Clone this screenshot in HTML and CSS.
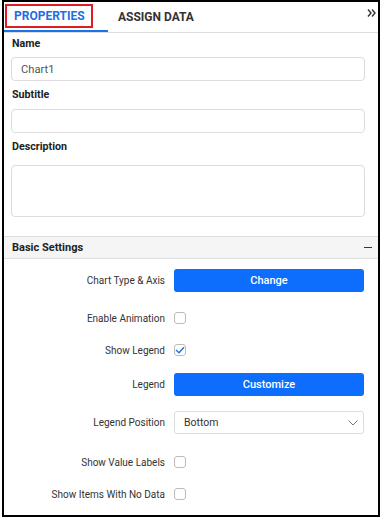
FILE: index.html
```html
<!DOCTYPE html>
<html>
<head>
<meta charset="utf-8">
<link rel="stylesheet" href="styles.css">
</head>
<body>
<div class="frame">
  <div class="tabs">
    <div class="tab active"><span class="tab-label boxed">PROPERTIES</span></div>
    <div class="tab"><span class="tab-label">ASSIGN DATA</span></div>
    <div class="tab-fill"></div>
    <svg class="collapse" width="9" height="8" viewBox="0 0 9 8"><path d="M1 0.5 L4 4 L1 7.5 M5 0.5 L8 4 L5 7.5" fill="none" stroke="#333" stroke-width="1.4"/></svg>
  </div>
  <div class="fields">
    <div class="field-label">Name</div>
    <div class="input">Chart1</div>
    <div class="field-label">Subtitle</div>
    <div class="input second"></div>
    <div class="field-label desc">Description</div>
    <div class="input textarea"></div>
  </div>
  <div class="section-head">
    <span>Basic Settings</span>
    <span class="minus"></span>
  </div>
  <div class="rows">
    <div class="row r-btn"><div class="lbl">Chart Type &amp; Axis</div><div class="btn">Change</div></div>
    <div class="row r-chk m14"><div class="lbl">Enable Animation</div><div class="chk"></div></div>
    <div class="row r-chk m8"><div class="lbl">Show Legend</div><div class="chk"><svg width="10" height="8" viewBox="0 0 10 8"><path d="M1 4 L4 6.8 L9 1.2" fill="none" stroke="#1a73e8" stroke-width="1.4"/></svg></div></div>
    <div class="row r-btn m11"><div class="lbl">Legend</div><div class="btn">Customize</div></div>
    <div class="row r-btn m15"><div class="lbl">Legend Position</div><div class="select"><span>Bottom</span><svg width="10" height="6" viewBox="0 0 10 6"><path d="M0.5 0.5 L5 5 L9.5 0.5" fill="none" stroke="#777" stroke-width="1"/></svg></div></div>
    <div class="row r-chk m16"><div class="lbl">Show Value Labels</div><div class="chk"></div></div>
    <div class="row r-chk m8"><div class="lbl">Show Items With No Data</div><div class="chk"></div></div>
  </div>
</div>
</body>
</html>
```
FILE: styles.css
```css
* { box-sizing: border-box; }
body {
  margin: 0;
  font-family: Roboto, "Liberation Sans", Arial, sans-serif;
  background: #fff;
  color: #333;
}
.frame {
  margin: 0 2px;
  width: 378px;
  height: 517px;
  border: 2px solid #000;
  display: flex;
  flex-direction: column;
}
.tabs {
  display: flex;
  align-items: stretch;
  height: 31px;
  border-bottom: 1px solid #ddd;
  position: relative;
}
.tab {
  display: flex;
  align-items: center;
  font-size: 12px;
  font-weight: 700;
  color: #333;
  height: 30px;
}
.tab.active {
  width: 104px;
  padding-left: 1px;
  color: #1a6fe6;
  border-bottom: 2px solid #1a73e8;
  height: 30px;
}
.tab-label.boxed {
  border: 2px solid #e01b24;
  padding: 3px 6px 3px 7px;
  line-height: 14px;
}
.tab:not(.active) { padding-left: 10px; }
.tab-fill { flex: 1; }
.collapse {
  position: absolute;
  right: 2px;
  top: 7px;
}
.fields {
  padding: 4px 13px 0 7px;
}
.field-label {
  font-size: 10.7px;
  font-weight: 700;
  color: #222;
  height: 20px;
  line-height: 14px;
  padding-left: 1px;
}
.input {
  height: 24px;
  border: 1px solid #ddd;
  border-radius: 4px;
  font-size: 11.2px;
  color: #555;
  padding: 5px 9px;
  margin-bottom: 7px;
}
.input.second { margin-top: 1px; }
.field-label.desc { margin-top: 1px; }
.textarea {
  height: 52px;
  margin-top: 5px;
  margin-bottom: 0;
}
.section-head {
  margin-top: 19px;
  height: 23px;
  background: #f5f5f5;
  border-top: 1px solid #ddd;
  border-bottom: 1px solid #ddd;
  display: flex;
  align-items: center;
  justify-content: space-between;
  padding: 0 6px 0 8px;
  font-size: 11px;
  font-weight: 700;
  color: #222;
}
.minus {
  width: 8px;
  height: 1.5px;
  background: #333;
}
.rows {
  padding-top: 10px;
}
.row {
  display: flex;
  align-items: center;
  font-size: 10px;
  color: #333;
}
.lbl {
  width: 161px;
  text-align: right;
}
.row > :last-child { margin-left: 9px; }
.r-btn { height: 23px; }
.r-chk { height: 24px; }
.m8 { margin-top: 8px; }
.m11 { margin-top: 11px; }
.m14 { margin-top: 14px; }
.m15 { margin-top: 15px; }
.m16 { margin-top: 16px; }
.btn {
  width: 190px;
  height: 23px;
  background: #0d6efd;
  border-radius: 3px;
  color: #fff;
  font-size: 11px;
  font-weight: 500;
  display: flex;
  align-items: center;
  justify-content: center;
}
.chk {
  width: 12px;
  height: 12px;
  border: 1px solid #bbb;
  border-radius: 3px;
  display: flex;
  align-items: center;
  justify-content: center;
}
.select {
  width: 190px;
  height: 23px;
  border: 1px solid #ddd;
  border-radius: 3px;
  display: flex;
  align-items: center;
  justify-content: space-between;
  padding: 0 5px 0 9px;
  font-size: 10.5px;
  color: #333;
}
```
